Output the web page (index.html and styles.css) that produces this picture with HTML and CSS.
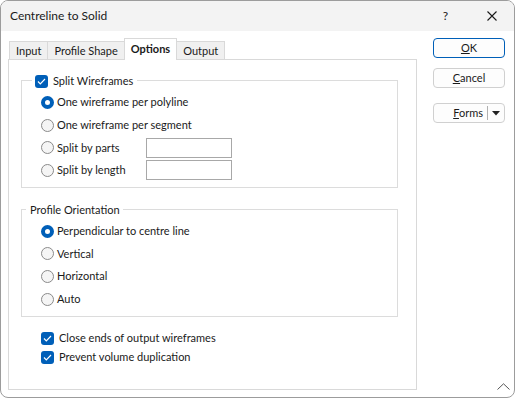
FILE: index.html
```html
<!DOCTYPE html>
<html lang="en">
<head>
  <meta charset="UTF-8">
  <title>Centreline to Solid</title>
  <link rel="stylesheet" href="styles.css">
</head>
<body>
  <div class="window">
    <div class="titlebar">
      <span class="title">Centreline to Solid</span>
      <span class="help">?</span>
      <svg class="close" width="10" height="10" viewBox="0 0 10 10"><path d="M0.5 0.5 L9.5 9.5 M9.5 0.5 L0.5 9.5" stroke="#1a1a1a" stroke-width="1.1" fill="none"/></svg>
    </div>

    <div class="content">
      <div class="tabarea">
        <div class="tabs">
          <div class="tab">Input</div>
          <div class="tab">Profile Shape</div>
          <div class="tab active">Options</div>
          <div class="tab">Output</div>
        </div>
        <div class="panel">
          <div class="group group-split">
            <div class="group-title">
              <span class="check"><svg width="9" height="7" viewBox="0 0 9 7"><path d="M1 3.5 L3.3 5.8 L8 1" stroke="#fff" stroke-width="1.2" fill="none"/></svg></span>
              Split Wireframes
            </div>
            <div class="row"><span class="radio on"></span>One wireframe per polyline</div>
            <div class="row"><span class="radio"></span>One wireframe per segment</div>
            <div class="row"><span class="radio"></span><span class="lbl">Split by parts</span><span class="field"></span></div>
            <div class="row"><span class="radio"></span><span class="lbl">Split by length</span><span class="field"></span></div>
          </div>

          <div class="group group-orient">
            <div class="group-title plain">Profile Orientation</div>
            <div class="row"><span class="radio on"></span>Perpendicular to centre line</div>
            <div class="row"><span class="radio"></span>Vertical</div>
            <div class="row"><span class="radio"></span>Horizontal</div>
            <div class="row"><span class="radio"></span>Auto</div>
          </div>

          <div class="checks">
            <div class="crow"><span class="check"><svg width="9" height="7" viewBox="0 0 9 7"><path d="M1 3.5 L3.3 5.8 L8 1" stroke="#fff" stroke-width="1.2" fill="none"/></svg></span>Close ends of output wireframes</div>
            <div class="crow"><span class="check"><svg width="9" height="7" viewBox="0 0 9 7"><path d="M1 3.5 L3.3 5.8 L8 1" stroke="#fff" stroke-width="1.2" fill="none"/></svg></span>Prevent volume duplication</div>
          </div>
        </div>
      </div>

      <div class="buttons">
        <div class="btn default"><span><u>O</u>K</span></div>
        <div class="btn"><span><u>C</u>ancel</span></div>
        <div class="btn forms">
          <span class="forms-label"><u>F</u>orms</span>
          <span class="sep"></span>
          <svg width="8" height="5" viewBox="0 0 8 5"><path d="M0 0 H8 L4 4.5 Z" fill="#222"/></svg>
        </div>
      </div>
    </div>

    <div class="grip">
      <svg width="13" height="7" viewBox="0 0 13 7"><path d="M0.5 6.5 L6.5 0.8 L12.5 6.5" stroke="#555" stroke-width="1" fill="none"/></svg>
    </div>
  </div>
</body>
</html>
```

FILE: styles.css
```css
* {
  box-sizing: border-box;
}
html, body {
  margin: 0;
  padding: 0;
  background: #fff;
}
body {
  font-family: 'Segoe UI', Lato, sans-serif;
  font-size: 11px;
  line-height: 16px;
  color: #1a1a1a;
}
.window {
  width: 515px;
  height: 398px;
  border: 1px solid #9c9c9c;
  border-radius: 8px;
  background: #fff;
  overflow: hidden;
  display: flex;
  flex-direction: column;
}
.titlebar {
  height: 30px;
  flex: none;
  background: #f3f3f3;
  display: flex;
  align-items: center;
  padding-left: 9px;
}
.title {
  font-size: 12px;
  flex: 1;
}
.help {
  font-size: 12px;
  margin-right: 39px;
}
.close {
  margin-right: 17px;
}
.content {
  display: flex;
  padding: 7px 0 0 7px;
  flex: 1;
}
.tabarea {
  width: 409px;
  display: flex;
  flex-direction: column;
}
.tabs {
  display: flex;
  align-items: flex-end;
  height: 21px;
  padding-left: 1px;
}
.tab {
  height: 18px;
  line-height: 17px;
  padding: 0 6px;
  background: #f0f0f0;
  border: 1px solid #d9d9d9;
  border-bottom: none;
  margin-right: -1px;
}
.tab.active {
  line-height: 19px;
  background: #fff;
  font-weight: bold;
  position: relative;
  margin-bottom: -1px;
  height: 22px;
  padding: 0 6px;
}
.panel {
  height: 331px;
  border: 1px solid #d9d9d9;
  padding: 20px 18px 0 12px;
}
.group {
  border: 1px solid #dcdcdc;
  padding: 0 0 5px 19px;
}
.group-title {
  display: flex;
  width: max-content;
  align-items: center;
  height: 16px;
  margin: -8px 0 2px -9px;
  padding: 0 4px 0 3px;
  background: #fff;
}
.group-title.plain {
  margin-left: -15px;
  padding: 0 3px 0 4px;
}
.group-title .check {
  margin-right: 5px;
}
.row {
  display: flex;
  align-items: center;
  height: 22.7px;
}
.group-orient {
  margin-top: 21px;
}
.radio {
  width: 13px;
  height: 13px;
  border-radius: 50%;
  border: 1px solid #8a8a8a;
  background: #f5f5f5;
  margin-right: 3px;
  flex: none;
}
.radio.on {
  border: 4px solid #005fb8;
  background: #fff;
}
.lbl {
  width: 89px;
}
.field {
  width: 86px;
  height: 20px;
  border: 1px solid #a8a8a8;
  background: #fff;
}
.check {
  width: 13px;
  height: 13px;
  border-radius: 3px;
  background: #005fb8;
  display: inline-flex;
  align-items: center;
  justify-content: center;
  flex: none;
}
.checks {
  padding: 12px 0 0 20px;
}
.crow {
  display: flex;
  align-items: center;
  height: 19px;
}
.crow .check {
  margin-right: 5px;
}
.buttons {
  margin-left: 16px;
  width: 72px;
  display: flex;
  flex-direction: column;
}
.btn {
  height: 20px;
  border: 1px solid #d0d0d0;
  border-radius: 4px;
  background: #fdfdfd;
  display: flex;
  align-items: center;
  justify-content: center;
  margin-bottom: 10px;
}
.btn.default {
  border-color: #005fb8;
}
.btn.forms {
  margin-top: 5px;
  justify-content: flex-end;
  padding-right: 4px;
}
.forms-label {
  margin-right: 4px;
}
.sep {
  width: 1px;
  height: 14px;
  background: #b0b0b0;
  margin-right: 4px;
}
.grip {
  display: flex;
  justify-content: flex-end;
  padding: 0 4px 7px 0;
  margin-top: -14px;
}
```
